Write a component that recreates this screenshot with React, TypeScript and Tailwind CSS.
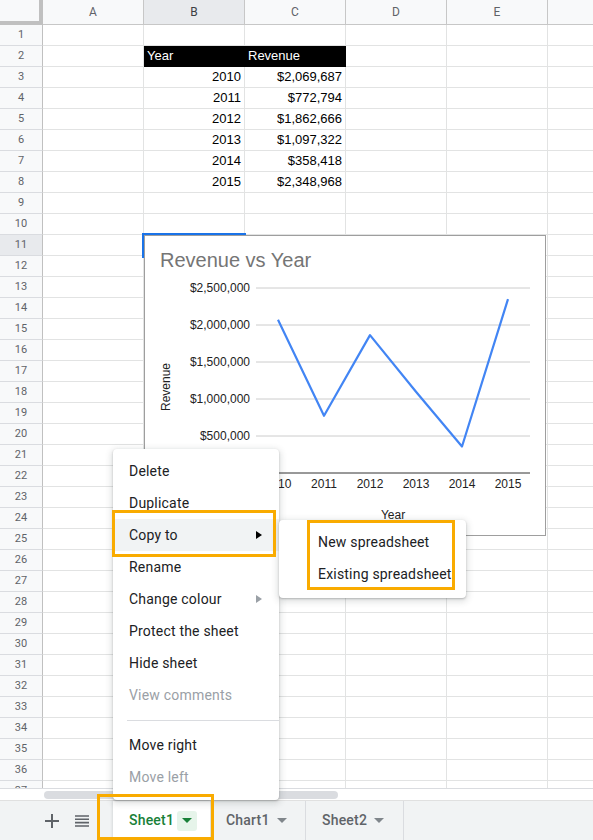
import React from 'react';

const cols = ['A', 'B', 'C', 'D', 'E', 'F'];

const data: Record<number, [string, string]> = {
  3: ['2010', '$2,069,687'],
  4: ['2011', '$772,794'],
  5: ['2012', '$1,862,666'],
  6: ['2013', '$1,097,322'],
  7: ['2014', '$358,418'],
  8: ['2015', '$2,348,968'],
};

const revenue = [2069687, 772794, 1862666, 1097322, 358418, 2348968];
const yearsX = [134, 180, 226, 272, 318, 364];
const baseY = 238;
const toY = (v: number) => baseY - (v / 500000) * 37;

type MenuItem = { label: string; disabled?: boolean; active?: boolean; arrow?: 'dark' | 'light' } | 'sep';

const menu: MenuItem[] = [
  { label: 'Delete' },
  { label: 'Duplicate' },
  { label: 'Copy to', active: true, arrow: 'dark' },
  { label: 'Rename' },
  { label: 'Change colour', arrow: 'light' },
  { label: 'Protect the sheet' },
  { label: 'Hide sheet' },
  { label: 'View comments', disabled: true },
  'sep',
  { label: 'Move right' },
  { label: 'Move left', disabled: true },
];

function Arrow({ dark }: { dark: boolean }) {
  return (
    <svg width="6" height="8" viewBox="0 0 6 8">
      <path d="M0 0 L6 4 L0 8 Z" fill={dark ? '#000000' : '#9aa0a6'} />
    </svg>
  );
}

function Caret({ color }: { color: string }) {
  return (
    <svg width="10" height="5" viewBox="0 0 10 5">
      <path d="M0 0 L10 0 L5 5 Z" fill={color} />
    </svg>
  );
}

function Chart() {
  const grid = [1, 2, 3, 4, 5];
  const labels = ['$500,000', '$1,000,000', '$1,500,000', '$2,000,000', '$2,500,000'];
  const points = revenue.map((v, i) => `${yearsX[i]},${toY(v)}`).join(' ');
  return (
    <div className="absolute left-[144px] top-[235px] w-[402px] h-[301px] border border-[#9e9e9e] bg-white">
      <svg width="400" height="299" viewBox="1 1 400 299" className="font-['Liberation_Sans',Arial,sans-serif]">
        <text x="16" y="32" fontSize="20" fill="#757575">Revenue vs Year</text>
        {grid.map((g, i) => (
          <g key={g}>
            <line x1="112" x2="386" y1={baseY - g * 37} y2={baseY - g * 37} stroke="#cccccc" strokeWidth="1" />
            <text x="106" y={baseY - g * 37 + 4} fontSize="12" fill="#222222" textAnchor="end">{labels[i]}</text>
          </g>
        ))}
        <line x1="112" x2="386" y1={baseY} y2={baseY} stroke="#333333" strokeWidth="1" />
        {yearsX.map((x, i) => (
          <text key={x} x={x} y="253" fontSize="12" fill="#222222" textAnchor="middle">{2010 + i}</text>
        ))}
        <text x="249" y="284" fontSize="12" fill="#222222" textAnchor="middle">Year</text>
        <text x="0" y="0" fontSize="12" fill="#222222" textAnchor="middle" transform="translate(26 152) rotate(-90)">Revenue</text>
        <polyline points={points} fill="none" stroke="#4285f4" strokeWidth="2.2" strokeLinejoin="round" />
      </svg>
    </div>
  );
}

export default function App() {
  const rows = Array.from({ length: 37 }, (_, i) => i + 1);
  return (
    <div className="relative w-[593px] h-[840px] overflow-hidden bg-white flex flex-col font-['Roboto',Arial,sans-serif]">
      {/* Sheet grid */}
      <div className="relative h-[788px] shrink-0 overflow-hidden">
        <div className="flex h-[25px]">
          <div className="w-[43px] h-[25px] shrink-0 bg-[#f8f9fa] border-r-4 border-b-4 border-[#c0c0c0]" />
          {cols.map((c) => (
            <div
              key={c}
              className={`w-[101px] h-[25px] shrink-0 flex items-center justify-center border-r border-b border-[#c7c7c7] text-[12px] ${
                c === 'B' ? 'bg-[#e8eaed] text-[#3c4043]' : 'bg-[#f8f9fa] text-[#5f6368]'
              }`}
            >
              {c === 'F' ? '' : c}
            </div>
          ))}
        </div>
        {rows.map((r) => (
          <div key={r} className="flex h-[21px] font-['Liberation_Sans',Arial,sans-serif] text-[13px] text-[#000000]">
            <div
              className={`w-[43px] h-[21px] shrink-0 flex items-center justify-center border-r border-r-[#c0c0c0] border-b border-b-[#dadce0] font-['Roboto',Arial,sans-serif] text-[11px] text-[#5f6368] ${
                r === 11 ? 'bg-[#e8eaed]' : 'bg-[#f8f9fa]'
              }`}
            >
              {r}
            </div>
            {cols.map((c) => {
              if (r === 2 && (c === 'B' || c === 'C')) {
                return (
                  <div key={c} className="w-[101px] h-[21px] shrink-0 bg-black border-r border-b border-black text-white flex items-center pl-[3px]">
                    {c === 'B' ? 'Year' : 'Revenue'}
                  </div>
                );
              }
              const d = data[r];
              const txt = d && c === 'B' ? d[0] : d && c === 'C' ? d[1] : '';
              return (
                <div key={c} className="w-[101px] h-[21px] shrink-0 border-r border-b border-[#e2e3e3] flex items-center justify-end pr-[3px]">
                  {txt}
                </div>
              );
            })}
          </div>
        ))}
        {/* Selected cell B11 */}
        <div className="absolute left-[142px] top-[233px] w-[104px] h-[25px] border-2 border-[#1a73e8]" />
        <Chart />
      </div>

      {/* Horizontal scrollbar */}
      <div className="h-[12px] shrink-0 border-t border-[#dadce0] flex items-center pl-[44px]">
        <div className="w-[294px] h-[8px] rounded-full bg-[#dadce0]" />
      </div>

      {/* Sheet tabs bar */}
      <div className="h-[40px] shrink-0 border-t border-[#e0e0e0] bg-[#f1f3f4] flex items-stretch">
        <div className="flex items-center pl-[45px] gap-[16px] w-[113px]">
          <svg width="14" height="14" viewBox="0 0 14 14">
            <path d="M7 0 V14 M0 7 H14" stroke="#5f6368" strokeWidth="2" />
          </svg>
          <svg width="14" height="12" viewBox="0 0 14 12">
            <path d="M0 1 H14 M0 4.3 H14 M0 7.6 H14 M0 11 H14" stroke="#5f6368" strokeWidth="1.6" />
          </svg>
        </div>
        <div className="w-[97px] bg-white flex items-center pl-[16px] gap-[3px] shadow-[0_0_3px_rgba(60,64,67,0.25)] text-[14px] font-medium tracking-[0.2px] text-[#188038]">
          <span>Sheet1</span>
          <span className="w-[20px] h-[20px] rounded-[3px] bg-[#e6f4ea] flex items-center justify-center">
            <Caret color="#188038" />
          </span>
        </div>
        <div className="w-[96px] flex items-center pl-[16px] gap-[2px] border-r border-[#dadce0] text-[14px] font-medium tracking-[0.2px] text-[#5f6368]">
          <span>Chart1</span>
          <span className="w-[20px] h-[20px] flex items-center justify-center">
            <Caret color="#80868b" />
          </span>
        </div>
        <div className="w-[98px] flex items-center pl-[16px] gap-[2px] border-r border-[#dadce0] text-[14px] font-medium tracking-[0.2px] text-[#5f6368]">
          <span>Sheet2</span>
          <span className="w-[20px] h-[20px] flex items-center justify-center">
            <Caret color="#80868b" />
          </span>
        </div>
      </div>

      {/* Context menu */}
      <div className="absolute left-[113px] top-[449px] w-[166px] h-[351px] bg-white rounded-[4px] pt-[6px] shadow-[0_2px_6px_2px_rgba(60,64,67,0.15),0_1px_2px_rgba(60,64,67,0.3)] text-[14px] tracking-[0.2px]">
        {menu.map((m, i) =>
          m === 'sep' ? (
            <div key={i} className="h-[18px] flex items-center pl-[14px]">
              <div className="h-px w-full bg-[#dadce0]" />
            </div>
          ) : (
            <div
              key={i}
              className={`h-[32px] flex items-center justify-between pl-[16px] pr-[17px] ${m.active ? 'bg-[#f1f3f4]' : ''} ${
                m.disabled ? 'text-[#9aa0a6]' : 'text-[#202124]'
              }`}
            >
              <span>{m.label}</span>
              {m.arrow && <Arrow dark={m.arrow === 'dark'} />}
            </div>
          )
        )}
      </div>

      {/* Submenu */}
      <div className="absolute left-[279px] top-[520px] w-[187px] h-[78px] bg-white rounded-[4px] pt-[6px] shadow-[0_2px_6px_2px_rgba(60,64,67,0.15),0_1px_2px_rgba(60,64,67,0.3)] text-[14px] tracking-[0.2px] text-[#202124]">
        <div className="h-[32px] flex items-center pl-[39px]">New spreadsheet</div>
        <div className="h-[32px] flex items-center pl-[39px]">Existing spreadsheet</div>
      </div>

      {/* Highlight boxes */}
      <div className="absolute left-[112px] top-[510px] w-[164px] h-[47px] border-[3px] border-[#f9ab00]" />
      <div className="absolute left-[307px] top-[520px] w-[148px] h-[70px] border-[3px] border-[#f9ab00]" />
      <div className="absolute left-[97px] top-[794px] w-[117px] h-[46px] border-[3px] border-[#f9ab00]" />
    </div>
  );
}
